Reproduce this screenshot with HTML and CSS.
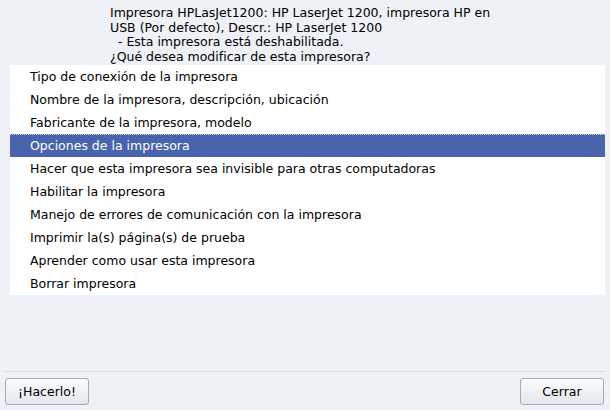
FILE: index.html
```html
<!DOCTYPE html>
<html lang="es">
<head>
  <meta charset="UTF-8">
  <title>Modificar impresora</title>
  <link rel="stylesheet" href="styles.css">
</head>
<body>
  <div class="dialog">
    <div class="info">Impresora HPLasJet1200: HP LaserJet 1200, impresora HP en
USB (Por defecto), Descr.: HP LaserJet 1200
  - Esta impresora está deshabilitada.
¿Qué desea modificar de esta impresora?</div>

    <ul class="options">
      <li>Tipo de conexión de la impresora</li>
      <li>Nombre de la impresora, descripción, ubicación</li>
      <li>Fabricante de la impresora, modelo</li>
      <li class="selected">Opciones de la impresora</li>
      <li>Hacer que esta impresora sea invisible para otras computadoras</li>
      <li>Habilitar la impresora</li>
      <li>Manejo de errores de comunicación con la impresora</li>
      <li>Imprimir la(s) página(s) de prueba</li>
      <li>Aprender como usar esta impresora</li>
      <li>Borrar impresora</li>
    </ul>

    <div class="spacer"></div>

    <div class="buttons">
      <button>¡Hacerlo!</button>
      <button>Cerrar</button>
    </div>
  </div>
</body>
</html>
```

FILE: styles.css
```css
html, body {
  margin: 0;
  padding: 0;
}
body {
  font-family: "DejaVu Sans", sans-serif;
  font-size: 12.5px;
  color: #000;
  background: #eef1f6;
}
.dialog {
  width: 610px;
  height: 410px;
  display: flex;
  flex-direction: column;
}
.info {
  white-space: pre;
  line-height: 14.7px;
  padding: 6px 0 0 110px;
  height: 65px;
  box-sizing: border-box;
}
.options {
  list-style: none;
  margin: 0 5px 0 10px;
  padding: 0;
  background: #fff;
}
.options li {
  height: 23px;
  line-height: 23px;
  padding-left: 20px;
}
.options li.selected {
  background: #4a63ad;
  color: #fff;
  height: 22px;
  line-height: 22px;
  border-top: 1px dotted #c8d0e8;
}
.spacer {
  flex: 1;
  border-bottom: 1px solid #d3d8df;
  margin: 0 5px;
}
.buttons {
  display: flex;
  justify-content: space-between;
  padding: 6px 6px 5px 5px;
}
button {
  font-family: "DejaVu Sans", sans-serif;
  font-size: 12.5px;
  height: 27px;
  padding: 0 12px;
  min-width: 84px;
  border: 1px solid #a3abb8;
  border-radius: 3px;
  background: linear-gradient(#fbfcfd, #e2e6ec);
  color: #000;
}
```
